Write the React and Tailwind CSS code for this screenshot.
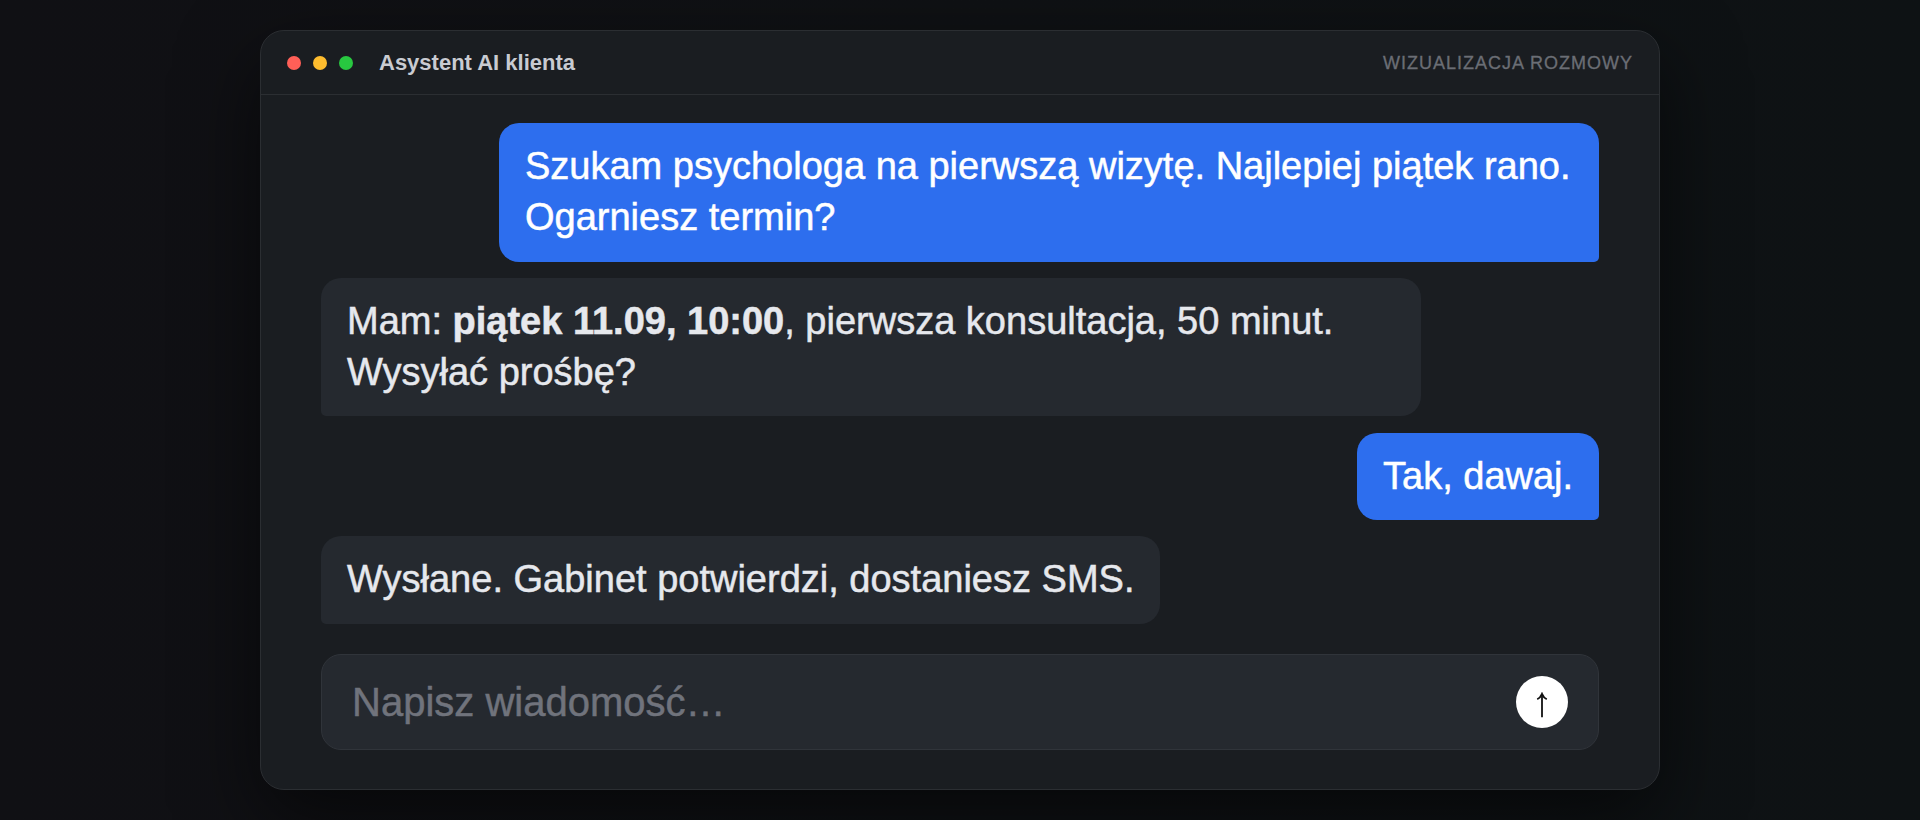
import React from 'react';

const messages = [
  { from: 'user', width: 'w-[1100px]', text: <>Szukam psychologa na pierwszą wizytę. Najlepiej piątek rano.<br />Ogarniesz termin?</> },
  { from: 'bot', width: 'w-[1100px]', text: <>Mam: <strong>piątek 11.09, 10:00</strong>, pierwsza konsultacja, 50 minut.<br />Wysyłać prośbę?</> },
  { from: 'user', width: 'w-[242px]', text: 'Tak, dawaj.' },
  { from: 'bot', width: 'w-[839px]', text: 'Wysłane. Gabinet potwierdzi, dostaniesz SMS.' },
];

const Bubble = ({ from, width, text }) => {
  const look = from === 'user'
    ? 'self-end bg-[#2d6eee] text-white rounded-br-[5px]'
    : 'self-start bg-[#25292f] text-[#e6e8ed] rounded-bl-[5px]';
  return (
    <div className={`${width} ${look} rounded-[20px] px-[26px] py-[18px] text-[38px] leading-[51.3px] whitespace-nowrap [-webkit-text-stroke:0.5px]`}>
      {text}
    </div>
  );
};

const App = () => {
  return (
    <div className="flex justify-center items-start h-[820px] pt-[30px] overflow-hidden bg-linear-to-r from-[#101014] to-[#0e1214] font-['Liberation_Sans',Arial,sans-serif]">
      <div className="flex flex-col w-[1400px] h-[760px] rounded-[24px] border border-[#2b2e32] bg-[#1a1d21] shadow-[0_30px_80px_rgba(0,0,0,0.55)]">
        <header className="flex items-center h-[64px] px-[26px] border-b border-[#2b2e32]">
          <div className="flex gap-3">
            <span className="size-3.5 rounded-full bg-[#ff5f57]" />
            <span className="size-3.5 rounded-full bg-[#febc2e]" />
            <span className="size-3.5 rounded-full bg-[#28c840]" />
          </div>
          <h1 className="ml-[26px] text-[22px] font-bold text-[#c9cbd1]">Asystent AI klienta</h1>
          <span className="ml-auto pt-px text-[18px] tracking-[1px] text-[#6b6e75] [-webkit-text-stroke:0.3px]">WIZUALIZACJA ROZMOWY</span>
        </header>

        <main className="flex flex-col px-[60px] pt-7">
          <div className="flex flex-col gap-[16.3px]">
            {messages.map((m, i) => (
              <Bubble key={i} {...m} />
            ))}
          </div>

          <div className="mt-[30px] flex items-center justify-between h-[96px] px-[30px] rounded-[20px] border border-[#30343a] bg-[#25292f]">
            <span className="text-[40px] text-[#70737c] [-webkit-text-stroke:0.5px]">Napisz wiadomość…</span>
            <button type="button" aria-label="Wyślij" className="flex items-center justify-center size-[52px] pt-1.5 rounded-full bg-white">
              <svg width="12" height="26" viewBox="0 0 12 26" fill="none" stroke="#111" strokeWidth="1.8">
                <path d="M6 25.3V2" />
                <path d="M1.2 7.3C3 6.4 5 4.2 6 1.8C7 4.2 9 6.4 10.8 7.3" />
              </svg>
            </button>
          </div>
        </main>
      </div>
    </div>
  );
};

export default App;
